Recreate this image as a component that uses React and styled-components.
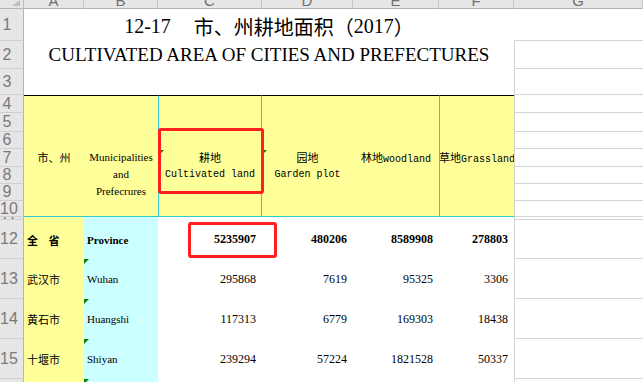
import React from 'react'
import styled, { createGlobalStyle } from 'styled-components'

const GlobalStyle = createGlobalStyle`
  html, body {
    margin: 0;
    padding: 0;
    background: #ffffff;
    overflow: hidden;
  }
`

const YELLOW = '#FFFF99'
const CYAN_FILL = '#CCFFFF'
const CYAN_LINE = '#33CCCC'
const GRID = '#d4d4d4'

const ROWS = [9, 32, 28, 26, 18, 19, 17, 18, 17, 17, 16, 3, 39, 40, 40, 40, 40]

const Sheet = styled.div`
  display: grid;
  grid-template-columns: 24px 60px 74px 104px 91px 86px 75px 1fr;
  grid-template-rows: ${ROWS.map(h => h + 'px').join(' ')};
  width: 643px;
  height: 382px;
  overflow: hidden;
  font-family: 'Liberation Serif', 'Noto Sans CJK SC', serif;
  color: #000;
`

const Corner = styled.div`
  grid-column: 1;
  grid-row: 1;
  background: #e6e6e6;
  border-right: 1px solid #bdbdbd;
  border-bottom: 1px solid #b4b4b4;
  box-sizing: border-box;
  position: relative;
  overflow: hidden;
`

const ColHead = styled.div`
  grid-column: ${p => p.$col};
  grid-row: 1;
  background: #e6e6e6;
  border-right: 1px solid #c6c6c6;
  border-bottom: 1px solid #b4b4b4;
  box-sizing: border-box;
  overflow: hidden;
  font-family: 'Liberation Sans', sans-serif;
  font-size: 15px;
  line-height: 1px;
  color: #707070;
  text-align: center;
`

const RowHead = styled.div`
  grid-column: 1;
  grid-row: ${p => p.$row};
  background: #e6e6e6;
  border-right: 1px solid #b4b4b4;
  border-bottom: 1px solid #cfcfcf;
  box-sizing: border-box;
  overflow: hidden;
  display: flex;
  align-items: ${p => (p.$tiny ? 'flex-start' : 'center')};
  font-family: 'Liberation Sans', sans-serif;
  font-size: 16px;
  line-height: ${p => (p.$tiny ? '3px' : 'normal')};
  color: #7a7a7a;
  span {
    width: 14px;
    text-align: center;
    white-space: nowrap;
  }
`

const Title = styled.div`
  grid-column: 2 / span 6;
  grid-row: ${p => p.$row};
  display: flex;
  align-items: center;
  justify-content: center;
  white-space: nowrap;
  font-size: ${p => p.$size}px;
  padding-top: ${p => p.$pad || 0}px;
  box-sizing: border-box;
`

const Gap = styled.span`
  display: inline-block;
  width: 23px;
`

const HeadCell = styled.div`
  grid-column: ${p => p.$col};
  grid-row: 5 / span 7;
  background: ${YELLOW};
  border-top: 1px solid #000;
  border-bottom: 1px solid ${CYAN_LINE};
  border-left: ${p => (p.$left ? `1px solid ${CYAN_LINE}` : 'none')};
  border-right: ${p => (p.$right ? `1px solid ${CYAN_LINE}` : 'none')};
  box-sizing: border-box;
  position: relative;
  display: flex;
  flex-direction: column;
  align-items: center;
  padding-top: 53px;
  font-size: 11px;
  line-height: 17px;
  white-space: nowrap;
  overflow: ${p => (p.$clip ? 'hidden' : 'visible')};
  z-index: ${p => (p.$top ? 2 : 1)};
`

const Cjk = styled.span`
  font-family: 'Noto Sans CJK SC', sans-serif;
  font-size: 11px;
`

const Mono = styled.span`
  font-family: 'Liberation Mono', monospace;
  font-size: 10px;
`

const DataCell = styled.div`
  grid-column: ${p => p.$col};
  grid-row: ${p => p.$row};
  background: ${p => p.$bg || '#fff'};
  box-sizing: border-box;
  position: relative;
  display: flex;
  align-items: center;
  justify-content: ${p => (p.$num ? 'flex-end' : 'flex-start')};
  padding: ${p => (p.$num ? '0 6px 0 0' : '0 0 0 3px')};
  font-size: ${p => (p.$num ? 12 : 11)}px;
  font-weight: ${p => (p.$bold ? 700 : 400)};
  white-space: nowrap;
  z-index: ${p => (p.$top ? 2 : 1)};
`

const CityName = styled.span`
  font-family: 'Noto Sans CJK SC', sans-serif;
  font-size: 11px;
  word-spacing: ${p => (p.$wide ? '8px' : '0')};
`

const BlankG = styled.div`
  grid-column: 8;
  grid-row: ${p => p.$row};
  border-bottom: 1px solid ${GRID};
  border-left: ${p => (p.$edge ? `1px solid ${GRID}` : 'none')};
  box-sizing: border-box;
`

const Note = styled.span`
  position: absolute;
  left: 0;
  top: ${p => p.$top || 0}px;
  width: 0;
  height: 0;
  border-top: 5px solid #008000;
  border-right: 5px solid transparent;
`

const Highlight = styled.div`
  position: absolute;
  left: ${p => p.$left}px;
  top: ${p => p.$top}px;
  width: ${p => p.$w}px;
  height: ${p => p.$h}px;
  border: 3px solid #ff1f1f;
  border-radius: 3px;
  box-sizing: border-box;
  pointer-events: none;
`

const letters = ['A', 'B', 'C', 'D', 'E', 'F', 'G']

const rows = [
  { no: 12, city: '全 省', name: 'Province', vals: [5235907, 480206, 8589908, 278803], bold: true },
  { no: 13, city: '武汉市', name: 'Wuhan', vals: [295868, 7619, 95325, 3306] },
  { no: 14, city: '黄石市', name: 'Huangshi', vals: [117313, 6779, 169303, 18438] },
  { no: 15, city: '十堰市', name: 'Shiyan', vals: [239294, 57224, 1821528, 50337] },
  { no: 16, city: '', name: '', vals: [] },
]

export default function App() {
  return (
    <>
      <GlobalStyle />
      <Sheet>
        <Corner>
          <svg width="24" height="9" style={{ display: 'block' }}>
            <polygon points="20,0 20,6 12,6" fill="#bdbdbd" />
          </svg>
        </Corner>
        {letters.map((l, i) => (
          <ColHead key={l} $col={i + 2}>{l}</ColHead>
        ))}
        {Array.from({ length: 16 }, (_, i) => (
          <RowHead key={i} $row={i + 2} $tiny={i === 10}><span>{i + 1}</span></RowHead>
        ))}

        <Title $row={2} $size={20} $pad={3}>
          12-17<Gap /><Cjk style={{ fontSize: 20 }}>市、州耕地面积（</Cjk>2017<Cjk style={{ fontSize: 20 }}>）</Cjk>
        </Title>
        <Title $row={3} $size={19}>CULTIVATED AREA OF CITIES AND PREFECTURES</Title>

        <HeadCell $col={2}><Cjk>市、州</Cjk></HeadCell>
        <HeadCell $col={3}>
          <span>Municipalities</span>
          <span>and</span>
          <span>Prefecrures</span>
        </HeadCell>
        <HeadCell $col={4} $left $right $top>
          <Note $top={54} />
          <Cjk>耕地</Cjk>
          <Mono>Cultivated land</Mono>
          <Highlight $left={-1} $top={32} $w={106} $h={66} />
        </HeadCell>
        <HeadCell $col={5}>
          <Note $top={54} />
          <Cjk>园地</Cjk>
          <Mono>Garden plot</Mono>
        </HeadCell>
        <HeadCell $col={6}>
          <span><Cjk>林地</Cjk><Mono>woodland</Mono></span>
        </HeadCell>
        <HeadCell $col={7} $left $clip>
          <span><Cjk>草地</Cjk><Mono>Grassland</Mono></span>
        </HeadCell>

        <DataCell $col={2} $row={12} $bg={YELLOW} />
        <DataCell $col={3} $row={12} $bg={CYAN_FILL} />
        {[4, 5, 6, 7].map(c => (
          <DataCell key={c} $col={c} $row={12} />
        ))}

        {rows.map((r, i) => {
          const track = r.no + 1
          return (
            <React.Fragment key={r.no}>
              <DataCell $col={2} $row={track} $bg={YELLOW} $bold={r.bold}>
                <CityName $wide={r.bold}>{r.city}</CityName>
              </DataCell>
              <DataCell $col={3} $row={track} $bg={CYAN_FILL} $bold={r.bold}>
                {i > 0 && <Note />}
                {r.name}
              </DataCell>
              {[0, 1, 2, 3].map(k => (
                <DataCell key={k} $col={k + 4} $row={track} $num $bold={r.bold} $top={r.bold && k === 0}>
                  {r.vals[k]}
                  {r.bold && k === 0 && <Highlight $left={30} $top={2} $w={89} $h={36} />}
                </DataCell>
              ))}
            </React.Fragment>
          )
        })}

        {Array.from({ length: 16 }, (_, i) => (
          <BlankG key={i} $row={i + 2} $edge={i > 0} />
        ))}
      </Sheet>
    </>
  )
}
